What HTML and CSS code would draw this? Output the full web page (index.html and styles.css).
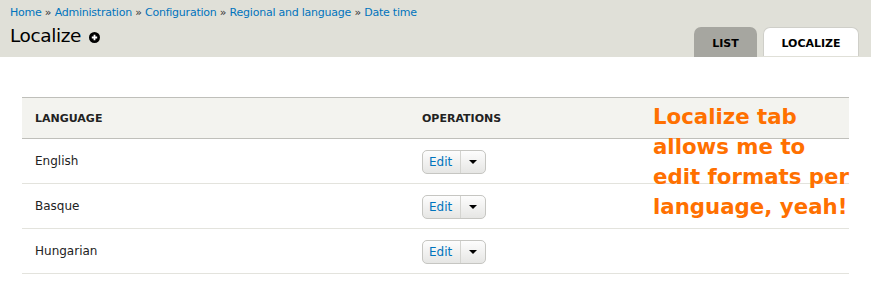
FILE: index.html
```html
<!DOCTYPE html>
<html>
<head>
<meta charset="utf-8">
<link rel="stylesheet" href="styles.css">
</head>
<body>
<div class="header">
  <div class="head-left">
    <div class="crumbs"><a href="#">Home</a> » <a href="#">Administration</a> » <a href="#">Configuration</a> » <a href="#">Regional and language</a> » <a href="#">Date time</a></div>
    <h1 class="title">Localize <span class="plus"><svg width="11" height="11" viewBox="0 0 11 11"><circle cx="5.5" cy="5.5" r="5.5" fill="#000"/><path d="M5.5 2.8v5.4M2.8 5.5h5.4" stroke="#fff" stroke-width="1.8"/></svg></span></h1>
  </div>
  <div class="tabs">
    <a class="tab tab-list" href="#">LIST</a>
    <a class="tab tab-active" href="#">LOCALIZE</a>
  </div>
</div>
<div class="content">
  <table class="grid">
    <thead>
      <tr><th class="c1">LANGUAGE</th><th>OPERATIONS</th></tr>
    </thead>
    <tbody>
      <tr><td class="c1">English</td><td><span class="btn"><a class="edit" href="#">Edit</a><span class="caret"></span></span></td></tr>
      <tr><td class="c1">Basque</td><td><span class="btn"><a class="edit" href="#">Edit</a><span class="caret"></span></span></td></tr>
      <tr><td class="c1">Hungarian</td><td><span class="btn"><a class="edit" href="#">Edit</a><span class="caret"></span></span></td></tr>
    </tbody>
  </table>
  <div class="note">Localize tab<br>allows me to<br>edit formats per<br>language, yeah!</div>
</div>
</body>
</html>
```
FILE: styles.css
```css
html, body { margin: 0; padding: 0; background: #fff; }
body { font-family: "DejaVu Sans", Verdana, sans-serif; color: #333; }
a { text-decoration: none; }
.header {
  background: #e0e0d8;
  height: 57px;
  display: flex;
  justify-content: space-between;
  align-items: flex-end;
  padding: 0 12px 0 10px;
  box-sizing: border-box;
}
.head-left { align-self: flex-start; }
.crumbs { font-size: 11px; line-height: 14px; margin-top: 6px; color: #333; letter-spacing: -0.23px; }
.crumbs a { color: #0074bd; }
.title {
  margin: 5px 0 0 0;
  font-size: 18.5px;
  font-weight: normal;
  line-height: 22px;
  color: #000;
  display: flex;
  align-items: center;
  letter-spacing: -0.4px;
}
.plus { display: inline-flex; margin-left: 8px; margin-top: 2px; }
.tabs { display: flex; gap: 6px; }
.tab {
  display: block;
  height: 30px;
  line-height: 33px;
  font-size: 11px;
  font-weight: bold;
  color: #000;
  text-align: center;
  border-radius: 7px 7px 0 0;
  box-sizing: border-box;
}
.tab-list { background: #a6a6a0; width: 63px; }
.tab-active { background: #fff; width: 96px; height: 29px; line-height: 31px; border: 1px solid #cfcfc9; border-bottom: none; }
.content { position: relative; padding: 40px 22px 0 22px; }
.grid { width: 827px; border-collapse: collapse; font-size: 12px; }
.grid th {
  background: #f3f3ef;
  text-align: left;
  font-size: 11px;
  font-weight: bold;
  height: 40px;
  padding: 0 13px;
  border-top: 1px solid #bfbfba;
  border-bottom: 1px solid #bfbfba;
  color: #222;
}
.grid td { height: 44px; padding: 0 13px; border-bottom: 1px solid #e3e3dd; color: #222; }
.grid .c1 { width: 361px; }
.btn {
  display: inline-flex;
  align-items: stretch;
  height: 22px;
  border: 1px solid #c6c6c2;
  border-radius: 5px;
  background: linear-gradient(#fdfdfd, #e6e6e4);
  vertical-align: middle;
  margin-top: 1px;
}
.edit { color: #0074bd; font-size: 12px; line-height: 22px; padding: 0 8px 0 6px; border-right: 1px solid #d4d4d0; }
.caret { width: 24px; display: flex; align-items: center; justify-content: center; }
.caret::after { content: ""; border-left: 4px solid transparent; border-right: 4px solid transparent; border-top: 4px solid #000; }
.note {
  position: absolute;
  left: 653px;
  top: 45px;
  font-size: 21.3px;
  font-weight: bold;
  line-height: 30px;
  color: #ff7000;
  white-space: nowrap;
}
```
